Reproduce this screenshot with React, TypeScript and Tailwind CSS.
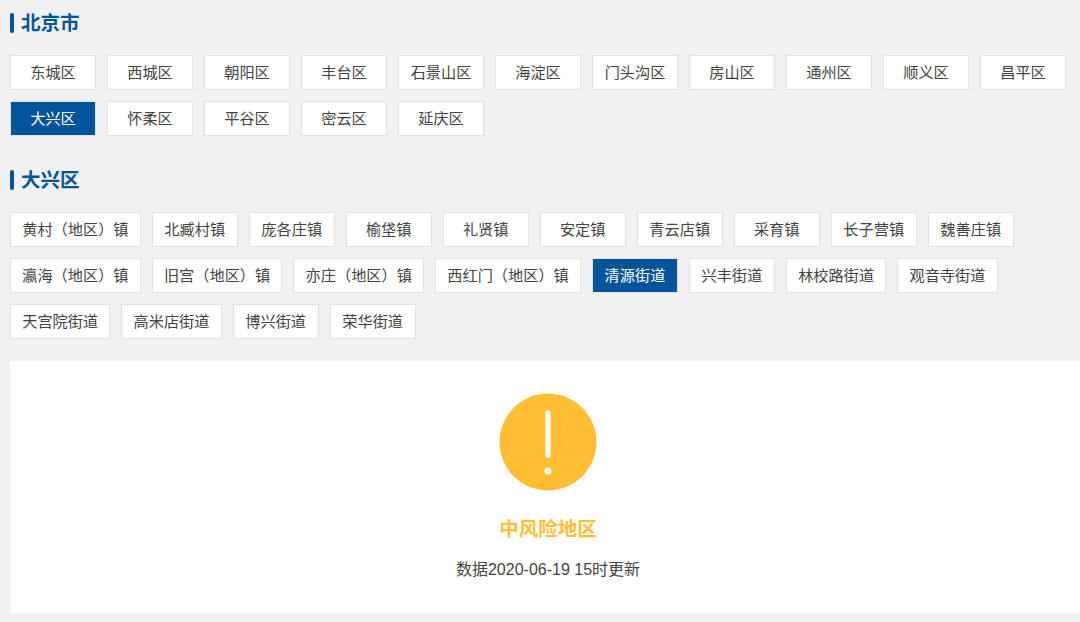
const districts = ["东城区", "西城区", "朝阳区", "丰台区", "石景山区", "海淀区", "门头沟区", "房山区", "通州区", "顺义区", "昌平区", "大兴区", "怀柔区", "平谷区", "密云区", "延庆区"];
const streets = ["黄村（地区）镇", "北臧村镇", "庞各庄镇", "榆垡镇", "礼贤镇", "安定镇", "青云店镇", "采育镇", "长子营镇", "魏善庄镇", "瀛海（地区）镇", "旧宫（地区）镇", "亦庄（地区）镇", "西红门（地区）镇", "清源街道", "兴丰街道", "林校路街道", "观音寺街道", "天宫院街道", "高米店街道", "博兴街道", "荣华街道"];

const Heading = ({ children }: { children: string }) => (
  <div className="flex items-center gap-[7px] h-5">
    <span className="w-1 h-5 rounded-full bg-[#00549a]" />
    <h2 className="text-[19.5px] leading-[19px] font-semibold text-[#00549a]">{children}</h2>
  </div>
);

const Chip = ({ label, active }: { label: string; active: boolean }) => (
  <div
    className={`h-[35px] min-w-[86px] px-[11.2px] pt-[1px] border flex items-center justify-center text-[15.2px] whitespace-nowrap ${
      active ? "bg-[#00549a] border-[#dfe5ea] text-white" : "bg-white border-[#e2e2e2] text-[#444]"
    }`}
  >
    {label}
  </div>
);

export default function App() {
  return (
    <div
      className="w-[1080px] h-[622px] overflow-hidden bg-[#f1f1f1] pt-[13px] pl-[10px]"
      style={{ fontFamily: '"Liberation Sans", "Noto Sans CJK SC", sans-serif' }}
    >
      <Heading>北京市</Heading>
      <div className="flex flex-wrap gap-[11px] mt-[22px]">
        {districts.map((d) => (
          <Chip key={d} label={d} active={d === "大兴区"} />
        ))}
      </div>
      <div className="mt-[34px]">
        <Heading>大兴区</Heading>
      </div>
      <div className="flex flex-wrap gap-[11px] mt-[22px]">
        {streets.map((s) => (
          <Chip key={s} label={s} active={s === "清源街道"} />
        ))}
      </div>
      <div className="mt-[22px] h-[252px] w-[1076px] bg-white flex flex-col items-center">
        <svg className="mt-[32px]" width="98" height="98" viewBox="0 0 98 98">
          <circle cx="49" cy="49" r="48.5" fill="#ffbe33" />
          <rect x="46.5" y="17" width="5" height="48" rx="2.5" fill="#fff" />
          <circle cx="49" cy="78" r="3.5" fill="#fff" />
        </svg>
        <div className="mt-[26px] text-[19.5px] leading-6 font-semibold text-[#ffbe33]">中风险地区</div>
        <div className="mt-[19px] text-[16px] leading-5 text-[#444]">数据2020-06-19 15时更新</div>
      </div>
    </div>
  );
}
